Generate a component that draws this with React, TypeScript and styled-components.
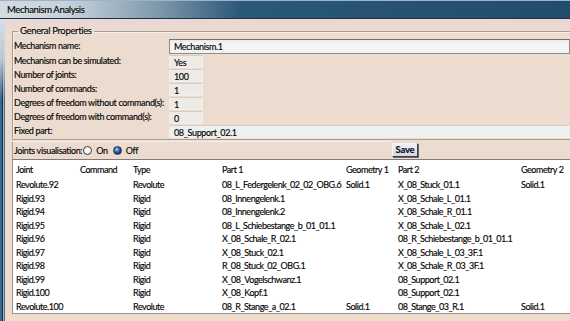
import * as React from 'react';
import styled, { createGlobalStyle } from 'styled-components';

const GlobalStyle = createGlobalStyle`
  html, body {
    margin: 0;
    padding: 0;
    background: #ecdccf;
  }
  body {
    font-family: Lato, 'Liberation Sans', sans-serif;
    font-size: 9px;
    letter-spacing: -0.35px;
    color: #050505;
    -webkit-text-stroke: 0.15px #050505;
  }
`;

interface JointRow {
  joint: string;
  command: string;
  type: string;
  part1: string;
  geometry1: string;
  part2: string;
  geometry2: string;
}

const joints: JointRow[] = [
  { joint: 'Revolute.92', command: '', type: 'Revolute', part1: '08_L_Federgelenk_02_02_OBG.6', geometry1: 'Solid.1', part2: 'X_08_Stuck_01.1', geometry2: 'Solid.1' },
  { joint: 'Rigid.93', command: '', type: 'Rigid', part1: '08_Innengelenk.1', geometry1: '', part2: 'X_08_Schale_L_01.1', geometry2: '' },
  { joint: 'Rigid.94', command: '', type: 'Rigid', part1: '08_Innengelenk.2', geometry1: '', part2: 'X_08_Schale_R_01.1', geometry2: '' },
  { joint: 'Rigid.95', command: '', type: 'Rigid', part1: '08_L_Schiebestange_b_01_01.1', geometry1: '', part2: 'X_08_Schale_L_02.1', geometry2: '' },
  { joint: 'Rigid.96', command: '', type: 'Rigid', part1: 'X_08_Schale_R_02.1', geometry1: '', part2: '08_R_Schiebestange_b_01_01.1', geometry2: '' },
  { joint: 'Rigid.97', command: '', type: 'Rigid', part1: 'X_08_Stuck_02.1', geometry1: '', part2: 'X_08_Schale_L_03_3F.1', geometry2: '' },
  { joint: 'Rigid.98', command: '', type: 'Rigid', part1: 'R_08_Stuck_02_OBG.1', geometry1: '', part2: 'X_08_Schale_R_03_3F.1', geometry2: '' },
  { joint: 'Rigid.99', command: '', type: 'Rigid', part1: 'X_08_Vogelschwanz.1', geometry1: '', part2: '08_Support_02.1', geometry2: '' },
  { joint: 'Rigid.100', command: '', type: 'Rigid', part1: 'X_08_Kopf.1', geometry1: '', part2: '08_Support_02.1', geometry2: '' },
  { joint: 'Revolute.100', command: '', type: 'Revolute', part1: '08_R_Stange_a_02.1', geometry1: 'Solid.1', part2: '08_Stange_03_R.1', geometry2: 'Solid.1' },
];

const properties = [
  { label: 'Mechanism can be simulated:', value: 'Yes' },
  { label: 'Number of joints:', value: '100' },
  { label: 'Number of commands:', value: '1' },
  { label: 'Degrees of freedom without command(s):', value: '1' },
  { label: 'Degrees of freedom with command(s):', value: '0' },
];

const Window = styled.div`
  width: 570px;
  height: 321px;
  overflow: hidden;
  display: flex;
  flex-direction: column;
  background: #ecdccf;
`;

const TitleBar = styled.div`
  height: 19px;
  flex: none;
  display: flex;
  align-items: center;
  padding-left: 7px;
  box-sizing: border-box;
  border-top: 1px solid #9fb3c6;
  border-bottom: 1px solid #1a3448;
  background: linear-gradient(90deg, #d3dce3 0, #c5d1da 70px, #7d97ab 160px, #2a587a 240px, #214d6d 100%);
  font-size: 9.5px;
`;

const Body = styled.div`
  flex: 1;
  display: flex;
  min-height: 0;
`;

const Frame = styled.div`
  width: 5px;
  flex: none;
  background:
    linear-gradient(180deg, rgba(214, 222, 228, 1) 0, rgba(200, 210, 218, 0.9) 40px, rgba(200, 210, 218, 0) 80px),
    linear-gradient(90deg, #3a6a92 0 2px, #102c48 2px 3px, #9db3c6 3px 4px, #5c6e7c 4px 5px);
`;

const Content = styled.div`
  flex: 1;
  display: flex;
  flex-direction: column;
  padding-left: 7px;
  background: linear-gradient(180deg, #ead6d5 0, #ecdccf 12px, #ecdccf 290px, #f0dcc8 100%);
`;

const GroupBox = styled.fieldset`
  margin: 6px -20px 0 0;
  padding: 1px 20px 1px 0;
  border: 1px solid #a89e96;
  border-right: none;
  box-shadow: inset 1px 1px 0 #f6eee8;
`;

const Legend = styled.legend`
  margin-left: 5px;
  padding: 0 2px;
  font-size: 9.5px;
  line-height: 12px;
`;

const PropGrid = styled.div`
  display: grid;
  grid-template-columns: 156px 1fr;
  align-items: center;
`;

const Label = styled.div<{ $tall?: boolean }>`
  height: ${(p) => (p.$tall ? 16 : 14)}px;
  line-height: ${(p) => (p.$tall ? 15 : 14)}px;
  padding-left: 1px;
  white-space: nowrap;
`;

const ValueBox = styled.div<{ $wide?: boolean; $editable?: boolean }>`
  box-sizing: border-box;
  height: ${(p) => (p.$editable ? 15 : 13)}px;
  width: ${(p) => (p.$wide ? 'auto' : '34px')};
  padding-left: 4px;
  line-height: 13px;
  white-space: nowrap;
  background: ${(p) =>
    p.$editable
      ? 'linear-gradient(180deg, #e8e8e8 0, #f6f6f6 4px, #f1f1f1 100%)'
      : p.$wide
        ? '#eef0f0'
        : '#eeebe7'};
  border: 1px solid ${(p) => (p.$editable ? '#8e8e8e' : '#f3efea')};
  border-top-color: ${(p) => (p.$editable ? '#707070' : '#d6cec6')};
`;

const JointsRow = styled.div`
  display: flex;
  align-items: center;
  height: 19px;
  flex: none;
`;

const RadioFrame = styled.div`
  width: 379px;
  height: 18px;
  box-sizing: border-box;
  display: flex;
  align-items: center;
  padding-left: 1px;
  border-left: 1px solid #a89e96;
  border-top: 1px solid #f6eee8;
`;

const RadioLabel = styled.span`
  margin-right: 1px;
`;

const RadioOption = styled.label`
  display: flex;
  align-items: center;
  gap: 4px;
  margin-right: 5px;
`;

const RadioDot = styled.span<{ $checked?: boolean }>`
  width: 9px;
  height: 9px;
  box-sizing: border-box;
  border-radius: 50%;
  border: 1px solid ${(p) => (p.$checked ? '#1d3a66' : '#3a3a3a')};
  background: ${(p) =>
    p.$checked
      ? 'radial-gradient(circle at 40% 35%, #d6e6ff 0, #5a86c8 25%, #1d3f80 60%, #0f2552 100%)'
      : 'radial-gradient(circle at 40% 35%, #ffffff 0, #f4f4f4 60%, #dcdcdc 100%)'};
`;

const SaveButton = styled.button`
  margin-left: 1px;
  height: 14px;
  width: 26px;
  padding: 0;
  font-family: inherit;
  font-size: 9.5px;
  letter-spacing: -0.2px;
  font-weight: bold;
  color: #111;
  background: linear-gradient(180deg, #eef0f6 0, #d6d8e4 100%);
  border: 1px solid #3c3c48;
  border-top-color: #f4f4f8;
  border-left-color: #f4f4f8;
  box-shadow: 1px 1px 0 #6a6a74;
`;

const Table = styled.div`
  margin-right: -10px;
  height: 155px;
  flex: none;
  box-sizing: border-box;
  background: #fff;
  border: 1px solid #9a9490;
  border-top-color: #827a74;
  overflow: hidden;
`;

const TableRow = styled.div<{ $header?: boolean }>`
  display: grid;
  grid-template-columns: 64px 53px 89px 124px 52px 123px 1fr;
  height: ${(p) => (p.$header ? 18 : 13.5)}px;
  line-height: ${(p) => (p.$header ? 19 : 13.5)}px;
`;

const Cell = styled.div`
  padding-left: 3px;
  white-space: nowrap;
  letter-spacing: -0.45px;
`;

const BottomStrip = styled.div`
  flex: 1;
`;

export default function App() {
  return (
    <>
      <GlobalStyle />
      <Window>
        <TitleBar>Mechanism Analysis</TitleBar>
        <Body>
          <Frame />
          <Content>
            <GroupBox>
              <Legend>General Properties</Legend>
              <PropGrid>
                <Label $tall>Mechanism name:</Label>
                <ValueBox $wide $editable>Mechanism.1</ValueBox>
                {properties.map((p) => (
                  <React.Fragment key={p.label}>
                    <Label>{p.label}</Label>
                    <ValueBox>{p.value}</ValueBox>
                  </React.Fragment>
                ))}
                <Label>Fixed part:</Label>
                <ValueBox $wide>08_Support_02.1</ValueBox>
              </PropGrid>
            </GroupBox>
            <JointsRow>
              <RadioFrame>
                <RadioLabel>Joints visualisation:</RadioLabel>
                <RadioOption>
                  <RadioDot />
                  On
                </RadioOption>
                <RadioOption>
                  <RadioDot $checked />
                  Off
                </RadioOption>
              </RadioFrame>
              <SaveButton>Save</SaveButton>
            </JointsRow>
            <Table>
              <TableRow $header>
                <Cell>Joint</Cell>
                <Cell>Command</Cell>
                <Cell>Type</Cell>
                <Cell>Part 1</Cell>
                <Cell>Geometry 1</Cell>
                <Cell>Part 2</Cell>
                <Cell>Geometry 2</Cell>
              </TableRow>
              {joints.map((j) => (
                <TableRow key={j.joint}>
                  <Cell>{j.joint}</Cell>
                  <Cell>{j.command}</Cell>
                  <Cell>{j.type}</Cell>
                  <Cell>{j.part1}</Cell>
                  <Cell>{j.geometry1}</Cell>
                  <Cell>{j.part2}</Cell>
                  <Cell>{j.geometry2}</Cell>
                </TableRow>
              ))}
            </Table>
            <BottomStrip />
          </Content>
        </Body>
      </Window>
    </>
  );
}
